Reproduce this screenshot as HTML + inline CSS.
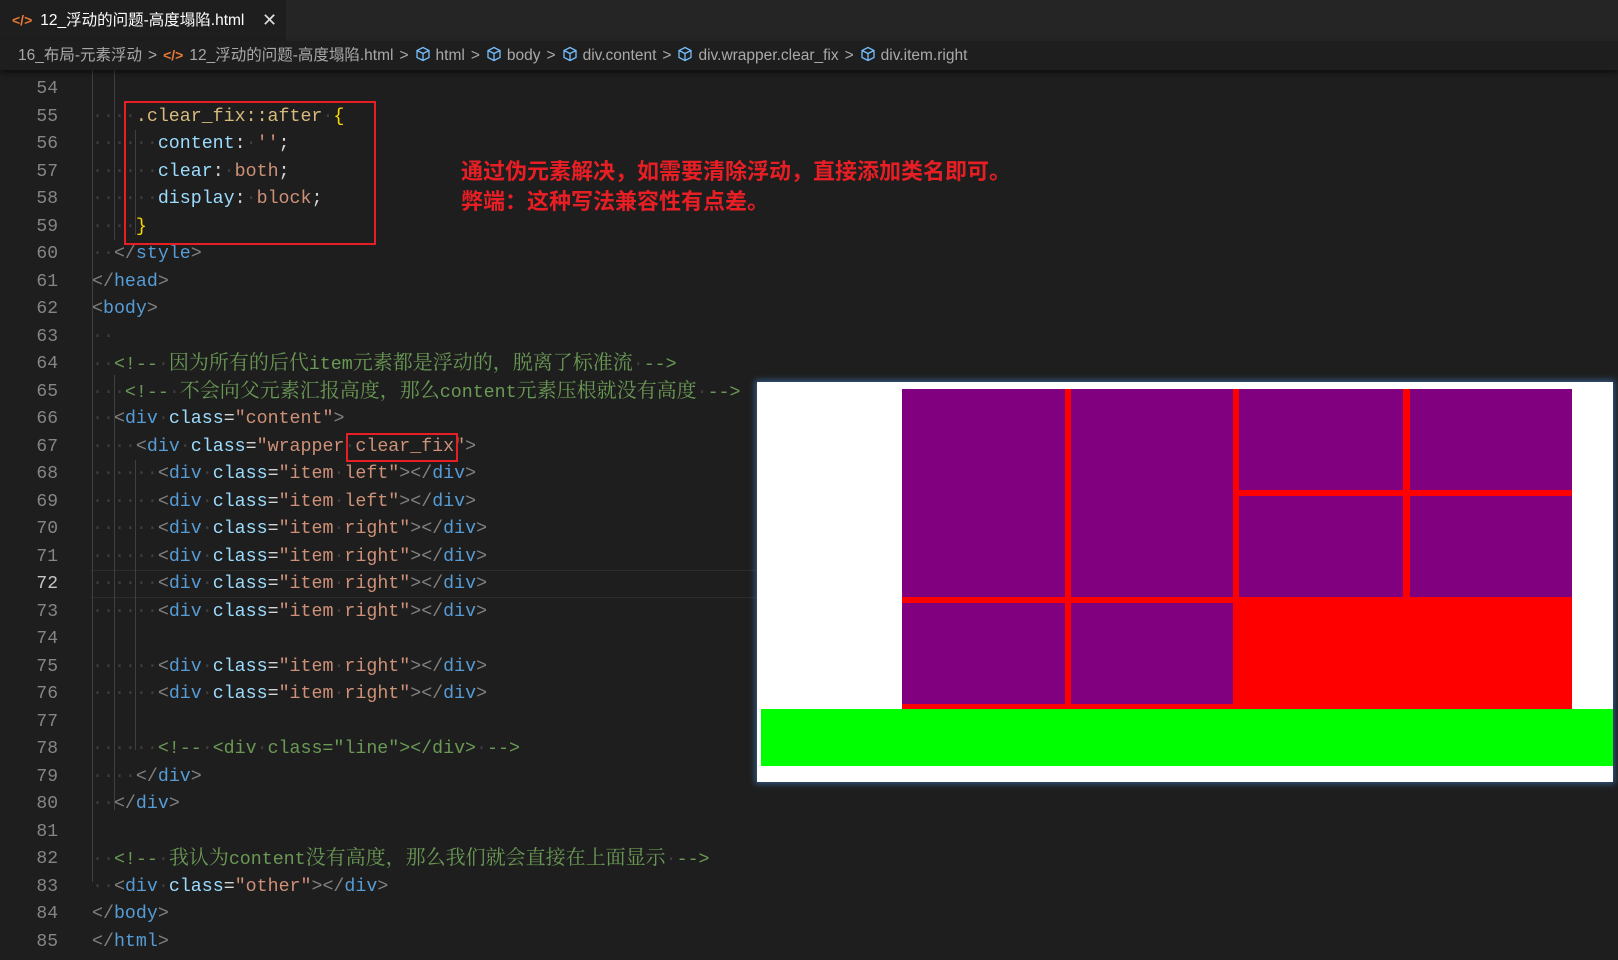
<!DOCTYPE html>
<html><head><meta charset="utf-8">
<style>
*{margin:0;padding:0;box-sizing:border-box}
html{width:1618px;height:960px;overflow:hidden}
body{width:1618px;height:960px;background:#1e1e1e;overflow:hidden;position:relative;font-family:"Liberation Sans","Noto Sans CJK SC",sans-serif}
.tabbar{position:absolute;left:0;top:0;width:1618px;height:41px;background:#252526}
.tab{position:absolute;left:0;top:0;width:286px;height:41px;background:#1e1e1e;color:#fff;font-size:15.5px;line-height:41px;padding-left:12px;white-space:nowrap}
.tab .ic{color:#e37933;font-weight:bold;font-size:14px;margin-right:8px}
.tab .x{position:absolute;left:262px;top:0;font-size:18px;color:#ddd}
.crumb{position:absolute;left:0;top:41px;width:1618px;height:29px;background:#1e1e1e;box-shadow:0 3px 5px rgba(0,0,0,.5);color:#a9a9a9;font-size:15.5px;line-height:29px;padding-left:18px;white-space:nowrap;z-index:2}
.crumb .sep{color:#a9a9a9;margin:0 6px}
.crumb .o{color:#e37933;font-weight:bold;font-size:14px;margin-right:6px}
.cube{display:inline-block;width:16px;height:16px;vertical-align:-2px;margin-right:5px}
.nums{position:absolute;left:0;top:76px;width:58px;text-align:right;font-family:"Liberation Mono",monospace;font-size:18px;line-height:27.5px;color:#858585}
.nums div{height:27.5px}
.code{position:absolute;left:92px;top:76px;font-family:"Liberation Mono","Noto Sans CJK SC",monospace;font-size:18.3px;line-height:27.5px;color:#d4d4d4}
.code div{height:27.5px;white-space:pre;overflow:visible}
i{font-style:normal;color:#3f3f3f}
.t{color:#569cd6}.b{color:#808080}.a{color:#9cdcfe}.s{color:#ce9178}.c{color:#6a9955}.cj{font-family:"Noto Serif CJK SC","Liberation Serif",serif;font-size:20px;line-height:1;vertical-align:baseline}
.sel{color:#d7ba7d}.y{color:#ffd700}
.cur{position:absolute;left:90px;top:570px;width:667px;height:28px;border-top:1px solid #2c2c2c;border-bottom:1px solid #2c2c2c}
.guide{position:absolute;width:1px;background:#404040}
.box{position:absolute;border:2px solid #e81e25}
.note{position:absolute;left:461px;top:155px;color:#e81e25;font-weight:bold;font-size:22px;line-height:30px;font-family:"Noto Sans CJK SC",sans-serif}
.prev{position:absolute;left:757px;top:382px;width:856px;height:400px;background:#fff;box-shadow:0 0 6px 2px rgba(60,110,170,.7)}
.r{position:absolute;background:red}
.p{position:absolute;background:#800080}
</style></head><body>
<div class="tabbar"><div class="tab"><span class="ic">&lt;/&gt;</span>12_浮动的问题-高度塌陷.html<span class="x">✕</span></div></div>
<div class="crumb">16_布局-元素浮动<span class="sep">&gt;</span><span class="o">&lt;/&gt;</span>12_浮动的问题-高度塌陷.html<span class="sep">&gt;</span><svg class="cube" viewBox="0 0 16 16"><path d="M8 1.5l6 3v7l-6 3-6-3v-7zM2 4.5l6 3 6-3M8 7.5v7" fill="none" stroke="#75beff" stroke-width="1.3"/></svg>html<span class="sep">&gt;</span><svg class="cube" viewBox="0 0 16 16"><path d="M8 1.5l6 3v7l-6 3-6-3v-7zM2 4.5l6 3 6-3M8 7.5v7" fill="none" stroke="#75beff" stroke-width="1.3"/></svg>body<span class="sep">&gt;</span><svg class="cube" viewBox="0 0 16 16"><path d="M8 1.5l6 3v7l-6 3-6-3v-7zM2 4.5l6 3 6-3M8 7.5v7" fill="none" stroke="#75beff" stroke-width="1.3"/></svg>div.content<span class="sep">&gt;</span><svg class="cube" viewBox="0 0 16 16"><path d="M8 1.5l6 3v7l-6 3-6-3v-7zM2 4.5l6 3 6-3M8 7.5v7" fill="none" stroke="#75beff" stroke-width="1.3"/></svg>div.wrapper.clear_fix<span class="sep">&gt;</span><svg class="cube" viewBox="0 0 16 16"><path d="M8 1.5l6 3v7l-6 3-6-3v-7zM2 4.5l6 3 6-3M8 7.5v7" fill="none" stroke="#75beff" stroke-width="1.3"/></svg>div.item.right</div>

<div class="cur"></div>
<div class="guide" style="left:92px;top:70px;height:812px"></div>
<div class="guide" style="left:114px;top:70px;height:170px"></div>
<div class="guide" style="left:135px;top:130px;height:105px"></div>
<div class="guide" style="left:114px;top:375px;height:435px"></div>
<div class="guide" style="left:135px;top:460px;height:290px"></div>

<div class="nums"><div>54</div><div>55</div><div>56</div><div>57</div><div>58</div><div>59</div><div>60</div><div>61</div><div>62</div><div>63</div><div>64</div><div>65</div><div>66</div><div>67</div><div>68</div><div>69</div><div>70</div><div>71</div><div style="color:#c6c6c6">72</div><div>73</div><div>74</div><div>75</div><div>76</div><div>77</div><div>78</div><div>79</div><div>80</div><div>81</div><div>82</div><div>83</div><div>84</div><div>85</div></div>

<div class="code"><div> </div><div><i>····</i><span class="sel">.clear_fix::after</span><i>·</i><span class="y">{</span></div><div><i>······</i><span class="a">content</span>:<i>·</i><span class="s">''</span>;</div><div><i>······</i><span class="a">clear</span>:<i>·</i><span class="s">both</span>;</div><div><i>······</i><span class="a">display</span>:<i>·</i><span class="s">block</span>;</div><div><i>····</i><span class="y">}</span></div><div><i>··</i><span class="b">&lt;/</span><span class="t">style</span><span class="b">&gt;</span></div><div><span class="b">&lt;/</span><span class="t">head</span><span class="b">&gt;</span></div><div><span class="b">&lt;</span><span class="t">body</span><span class="b">&gt;</span></div><div><i>··</i></div><div><i>··</i><span class="c">&lt;!--<i>·</i><span class="cj">因为所有的后代</span>item<span class="cj">元素都是浮动的，脱离了标准流</span><i>·</i>--&gt;</span></div><div><i>···</i><span class="c">&lt;!--<i>·</i><span class="cj">不会向父元素汇报高度，那么</span>content<span class="cj">元素压根就没有高度</span><i>·</i>--&gt;</span></div><div><i>··</i><span class="b">&lt;</span><span class="t">div</span><i>·</i><span class="a">class</span>=<span class="s">"content"</span><span class="b">&gt;</span></div><div><i>····</i><span class="b">&lt;</span><span class="t">div</span><i>·</i><span class="a">class</span>=<span class="s">"wrapper<i>·</i>clear_fix"</span><span class="b">&gt;</span></div><div><i>······</i><span class="b">&lt;</span><span class="t">div</span><i>·</i><span class="a">class</span>=<span class="s">"item<i>·</i>left"</span><span class="b">&gt;&lt;/</span><span class="t">div</span><span class="b">&gt;</span></div><div><i>······</i><span class="b">&lt;</span><span class="t">div</span><i>·</i><span class="a">class</span>=<span class="s">"item<i>·</i>left"</span><span class="b">&gt;&lt;/</span><span class="t">div</span><span class="b">&gt;</span></div><div><i>······</i><span class="b">&lt;</span><span class="t">div</span><i>·</i><span class="a">class</span>=<span class="s">"item<i>·</i>right"</span><span class="b">&gt;&lt;/</span><span class="t">div</span><span class="b">&gt;</span></div><div><i>······</i><span class="b">&lt;</span><span class="t">div</span><i>·</i><span class="a">class</span>=<span class="s">"item<i>·</i>right"</span><span class="b">&gt;&lt;/</span><span class="t">div</span><span class="b">&gt;</span></div><div><i>······</i><span class="b">&lt;</span><span class="t">div</span><i>·</i><span class="a">class</span>=<span class="s">"item<i>·</i>right"</span><span class="b">&gt;&lt;/</span><span class="t">div</span><span class="b">&gt;</span></div><div><i>······</i><span class="b">&lt;</span><span class="t">div</span><i>·</i><span class="a">class</span>=<span class="s">"item<i>·</i>right"</span><span class="b">&gt;&lt;/</span><span class="t">div</span><span class="b">&gt;</span></div><div> </div><div><i>······</i><span class="b">&lt;</span><span class="t">div</span><i>·</i><span class="a">class</span>=<span class="s">"item<i>·</i>right"</span><span class="b">&gt;&lt;/</span><span class="t">div</span><span class="b">&gt;</span></div><div><i>······</i><span class="b">&lt;</span><span class="t">div</span><i>·</i><span class="a">class</span>=<span class="s">"item<i>·</i>right"</span><span class="b">&gt;&lt;/</span><span class="t">div</span><span class="b">&gt;</span></div><div> </div><div><i>······</i><span class="c">&lt;!--<i>·</i>&lt;div<i>·</i>class="line"&gt;&lt;/div&gt;<i>·</i>--&gt;</span></div><div><i>····</i><span class="b">&lt;/</span><span class="t">div</span><span class="b">&gt;</span></div><div><i>··</i><span class="b">&lt;/</span><span class="t">div</span><span class="b">&gt;</span></div><div> </div><div><i>··</i><span class="c">&lt;!--<i>·</i><span class="cj">我认为</span>content<span class="cj">没有高度，那么我们就会直接在上面显示</span><i>·</i>--&gt;</span></div><div><i>··</i><span class="b">&lt;</span><span class="t">div</span><i>·</i><span class="a">class</span>=<span class="s">"other"</span><span class="b">&gt;&lt;/</span><span class="t">div</span><span class="b">&gt;</span></div><div><span class="b">&lt;/</span><span class="t">body</span><span class="b">&gt;</span></div><div><span class="b">&lt;/</span><span class="t">html</span><span class="b">&gt;</span></div></div>

<div class="box" style="left:124px;top:101px;width:252px;height:144px"></div>
<div class="box" style="left:346px;top:433px;width:112px;height:29px"></div>
<div class="note">通过伪元素解决，如需要清除浮动，直接添加类名即可。<br>弊端：这种写法兼容性有点差。</div>

<div class="prev">
<div class="r" style="left:145px;top:7px;width:670px;height:320px"></div>
<div class="p" style="left:145px;top:7px;width:163px;height:208px"></div>
<div class="p" style="left:314px;top:7px;width:162px;height:208px"></div>
<div class="p" style="left:482px;top:7px;width:164px;height:101px"></div>
<div class="p" style="left:653px;top:7px;width:162px;height:101px"></div>
<div class="p" style="left:482px;top:114px;width:164px;height:101px"></div>
<div class="p" style="left:653px;top:114px;width:162px;height:101px"></div>
<div class="p" style="left:145px;top:221px;width:163px;height:101px"></div>
<div class="p" style="left:314px;top:221px;width:162px;height:101px"></div>
<div style="position:absolute;left:4px;top:327px;width:852px;height:57px;background:#0f0"></div>
</div>
</body></html>
